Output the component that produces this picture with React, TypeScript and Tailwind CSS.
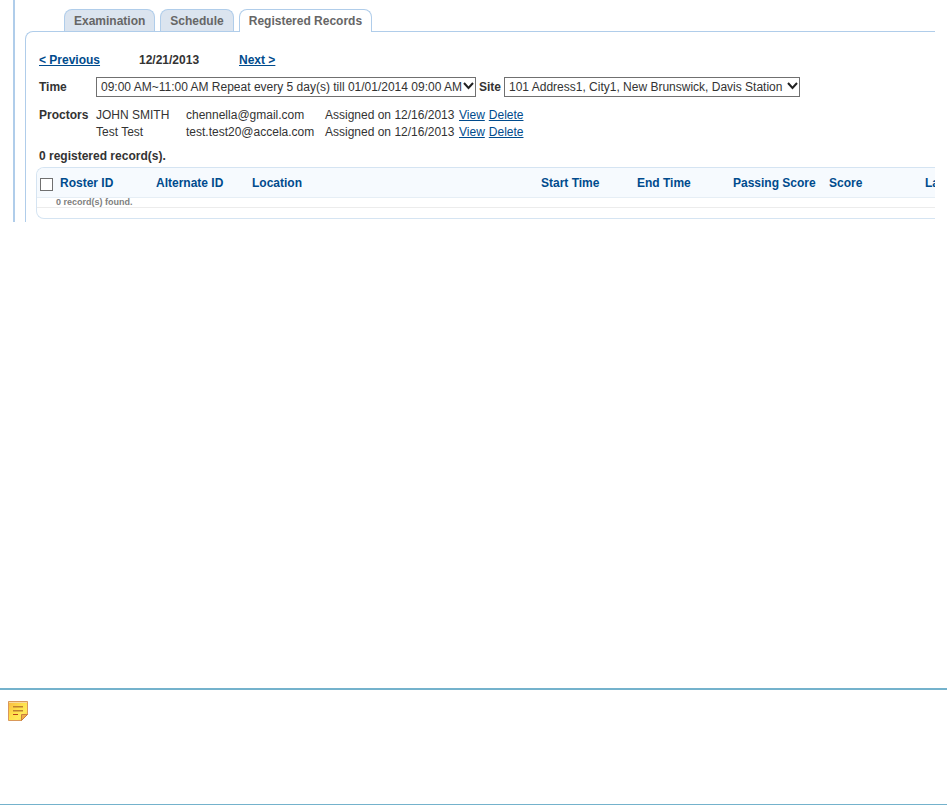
import type { ReactNode } from 'react'
import clsx from 'clsx'

const tabs = [
  { name: 'Examination', active: false },
  { name: 'Schedule', active: false },
  { name: 'Registered Records', active: true },
]

const proctors = [
  { name: 'JOHN SMITH', email: 'chennella@gmail.com', assigned: '12/16/2013' },
  { name: 'Test Test', email: 'test.test20@accela.com', assigned: '12/16/2013' },
]

const columns = [
  { name: 'Roster ID', width: 'w-24' },
  { name: 'Alternate ID', width: 'w-24' },
  { name: 'Location', width: 'w-[289px]' },
  { name: 'Start Time', width: 'w-24' },
  { name: 'End Time', width: 'w-24' },
  { name: 'Passing Score', width: 'w-24' },
  { name: 'Score', width: 'w-24' },
  { name: 'La', width: 'w-24' },
]

function Tabs() {
  return (
    <nav className="flex gap-[5px] pl-[39px]">
      {tabs.map((tab) => (
        <button
          key={tab.name}
          className={clsx(
            'rounded-t-lg border border-b-0 border-[#b0cdea] px-[9px] font-bold text-[#666666]',
            tab.active ? 'relative -mb-px h-[23px] bg-white' : 'h-[22px] bg-[#dbe4ef]',
          )}
        >
          {tab.name}
        </button>
      ))}
    </nav>
  )
}

function Select({ id, width, children }: { id: string; width: string; children: ReactNode }) {
  return (
    <div className={clsx('relative h-5', width)}>
      <select id={id} className="block h-5 w-full appearance-none border border-[#707070] bg-white pr-3 pl-1">
        {children}
      </select>
      <svg
        className="pointer-events-none absolute top-[5px] right-0.5 h-2 w-[11px]"
        viewBox="0 0 11 8"
        fill="none"
        stroke="#222222"
        strokeWidth="2"
      >
        <path d="M1 1 L5.5 6 L10 1" />
      </svg>
    </div>
  )
}

function ProctorList() {
  return (
    <table className="leading-[17px]">
      <tbody>
        {proctors.map((proctor, i) => (
          <tr key={proctor.email}>
            <th className="w-[57px] p-0 text-left">{i === 0 ? 'Proctors' : ''}</th>
            <td className="w-[90px] p-0">{proctor.name}</td>
            <td className="w-[139px] p-0">{proctor.email}</td>
            <td className="w-[134px] p-0">Assigned on {proctor.assigned}</td>
            <td className="p-0 text-[#004b8d]">
              <a href="#view" className="mr-1 underline">View</a>
              <a href="#delete" className="underline">Delete</a>
            </td>
          </tr>
        ))}
      </tbody>
    </table>
  )
}

function RecordTable() {
  return (
    <div className="overflow-hidden rounded-l-lg border border-r-0 border-[#d5e4f2] pb-[10px]">
      <table className="w-[984px] table-fixed">
        <thead>
          <tr className="h-[29px] border-b border-[#e6eef5] bg-[#f6fafe] text-[#004b8d]">
            <th className="w-[23px] p-0 pl-[3px]">
              <input
                type="checkbox"
                aria-label="Select all records"
                className="mt-1 block size-[13px] appearance-none border border-[#707070] bg-white"
              />
            </th>
            {columns.map((column) => (
              <th key={column.name} className={clsx('p-0 pt-0.5 text-left', column.width)}>{column.name}</th>
            ))}
          </tr>
        </thead>
        <tbody>
          <tr className="h-[10px] border-b border-[#ececec]">
            <td colSpan={9} className="p-0 pl-[19px] text-[9px] leading-[9px] font-bold text-[#808080]">
              0 record(s) found.
            </td>
          </tr>
        </tbody>
      </table>
    </div>
  )
}

function NoteIcon() {
  return (
    <svg className="h-[21px] w-[21px]" viewBox="0 0 21 21">
      <defs>
        <linearGradient id="note" x1="0" y1="0" x2="1" y2="1">
          <stop offset="0" stopColor="#f9b840" />
          <stop offset="0.45" stopColor="#ffe04a" />
          <stop offset="0.7" stopColor="#ffe95a" />
          <stop offset="1" stopColor="#fbc238" />
        </linearGradient>
      </defs>
      <path d="M0.5 0.5 H19.5 V13.5 L13.5 19.5 H0.5 Z" fill="url(#note)" stroke="#d9985a" />
      <path d="M1 1.5 H19" stroke="#f9d99a" />
      <path d="M13.5 19.5 V13.5 H19.5 Z" fill="#f0ae48" stroke="#c98040" />
      <path d="M5 5 H15 V6.5 H5 Z M5 9 H15 V10.5 H5 Z" fill="#bd8030" />
      <path d="M5 13 H10 V14 H5 Z" fill="#b8441c" />
    </svg>
  )
}

export default function App() {
  return (
    <div className="bg-white font-['Liberation_Sans',Arial,sans-serif] text-xs text-[#333333]">
      <section className="mr-3 ml-[13px] overflow-hidden border-l-2 border-[#b0cdea] pt-[9px] pl-[10px]">
        <Tabs />

        <div className="rounded-tl-lg border-t border-l border-[#b0cdea] pt-5 pb-[3px] pl-[10px]">
          <div className="pl-[3px]">
            <div className="flex font-bold">
              <a href="#previous" className="w-[100px] text-[#004b8d] underline">&lt; Previous</a>
              <span className="w-[100px]">12/21/2013</span>
              <a href="#next" className="text-[#004b8d] underline">Next &gt;</a>
            </div>

            <div className="mt-[9px] mb-[10px] flex items-center">
              <label htmlFor="time" className="w-[57px] font-bold">Time</label>
              <Select id="time" width="w-[380px]">
                <option>09:00 AM~11:00 AM Repeat every 5 day(s) till 01/01/2014 09:00 AM</option>
              </Select>
              <label htmlFor="site" className="mx-[3px] font-bold">Site</label>
              <Select id="site" width="w-[296px]">
                <option>101 Address1, City1, New Brunswick, Davis Station</option>
              </Select>
            </div>

            <ProctorList />
            <p className="mt-[7px] mb-[3px] font-bold">0 registered record(s).</p>
          </div>

          <RecordTable />
        </div>
      </section>

      <aside className="mt-[466px] h-[117px] border-t-2 border-b border-[#74b2cc] pt-[11px] pl-2">
        <NoteIcon />
      </aside>
    </div>
  )
}
